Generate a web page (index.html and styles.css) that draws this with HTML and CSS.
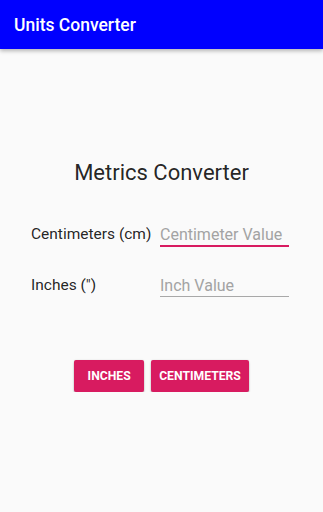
FILE: index.html
```html
<!DOCTYPE html>
<html>
<head>
<meta charset="utf-8">
<link rel="stylesheet" href="styles.css">
</head>
<body>
<header class="appbar"><span class="appbar-title">Units Converter</span></header>
<main class="content">
  <h1 class="heading">Metrics Converter</h1>
  <div class="form">
    <label class="label" for="cm">Centimeters (cm)</label>
    <input class="field field-focused" id="cm" type="text" placeholder="Centimeter Value">
    <label class="label" for="in">Inches (")</label>
    <input class="field" id="in" type="text" placeholder="Inch Value">
  </div>
  <div class="actions">
    <button class="btn">INCHES</button>
    <button class="btn">CENTIMETERS</button>
  </div>
</main>
</body>
</html>
```
FILE: styles.css
```css
html, body {
  margin: 0;
  padding: 0;
  background: #fafafa;
  font-family: Roboto, "Liberation Sans", sans-serif;
}
.appbar {
  height: 49px;
  background: #0000ff;
  display: flex;
  align-items: center;
  padding-left: 14px;
  box-shadow: 0 2px 4px rgba(0,0,0,0.28);
  position: relative;
  z-index: 1;
}
.appbar-title {
  color: #fff;
  font-size: 17.5px;
  font-weight: 500;
  line-height: 20px;
  margin-top: 1px;
}
.content {
  padding-top: 111px;
}
.heading {
  margin: 0;
  text-align: center;
  font-size: 22px;
  font-weight: 400;
  line-height: 26px;
  color: rgba(0,0,0,0.87);
}
.form {
  margin-top: 38px;
  padding-left: 31px;
  display: grid;
  grid-template-columns: 129px 129px;
  row-gap: 27.7px;
  align-items: start;
}
.label {
  font-size: 15.5px;
  line-height: 21px;
  color: rgba(0,0,0,0.87);
}
.field {
  font-family: Roboto, "Liberation Sans", sans-serif;
  font-size: 16px;
  line-height: 21px;
  height: 21px;
  padding: 0;
  margin: 0;
  border: none;
  border-bottom: 1px solid #a8a8a8;
  background: transparent;
  outline: none;
  width: 129px;
  box-sizing: content-box;
}
.field::placeholder {
  color: #a3a3a3;
}
.field-focused {
  border-bottom: 2px solid #d81b60;
}
.actions {
  margin-top: 63px;
  display: flex;
  justify-content: center;
  gap: 7px;
}
.btn {
  height: 32px;
  min-width: 70px;
  padding: 0 8px;
  border: none;
  border-radius: 2px;
  background: #d81b60;
  color: #fff;
  font-family: Roboto, "Liberation Sans", sans-serif;
  font-size: 12.2px;
  font-weight: 700;
  box-shadow: 0 2px 2px rgba(0,0,0,0.24), 0 0 2px rgba(0,0,0,0.12);
}
```
